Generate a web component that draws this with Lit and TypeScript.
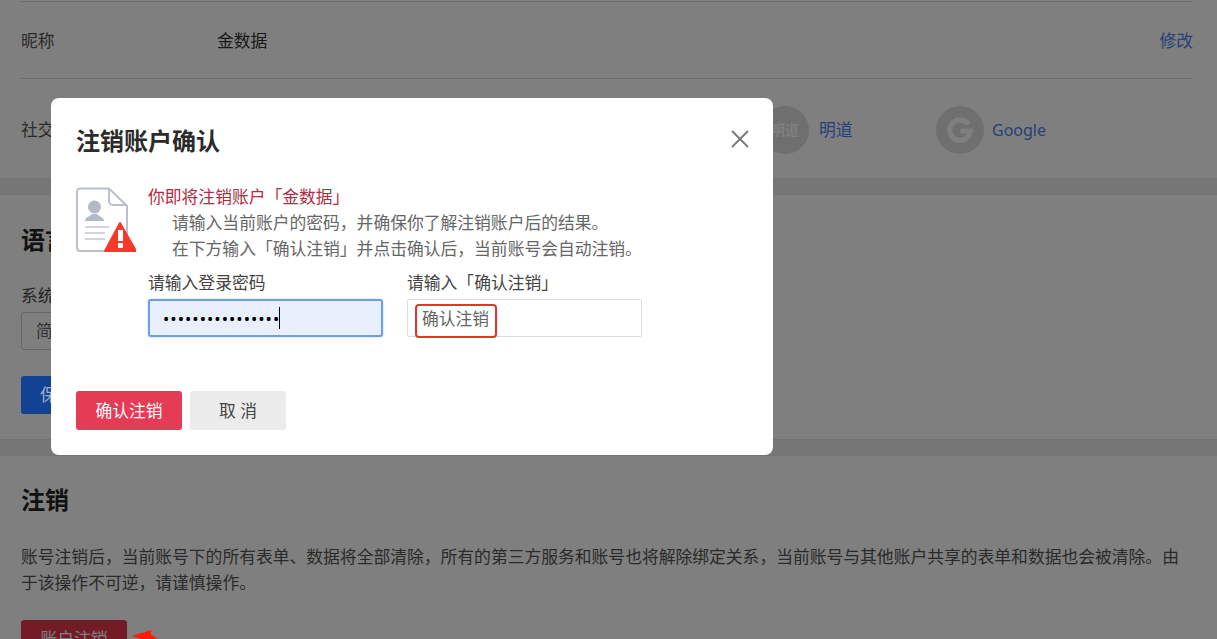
import { LitElement, html, css } from "lit";
import { customElement } from "lit/decorators.js";

const COMMA = "\uFF0C";
const PARA = `账号注销后${COMMA}当前账号下的所有表单、数据将全部清除${COMMA}所有的第三方服务和账号也将解除绑定关系${COMMA}当前账号与其他账户共享的表单和数据也会被清除。由于该操作不可逆${COMMA}请谨慎操作。`;
const DESC1 = `请输入当前账户的密码${COMMA}并确保你了解注销账户后的结果。`;
const DESC2 = `在下方输入「确认注销」并点击确认后${COMMA}当前账号会自动注销。`;

@customElement("app-root")
export class AppRoot extends LitElement {
  static styles = css`
    :host {
      display: block;
      position: relative;
      height: 639px;
      overflow: hidden;
      background: #fff;
      font-family: "Noto Sans", "Noto Sans CJK SC", sans-serif;
      font-size: 16.8px;
      line-height: 26px;
      color: #333;
    }
    * { box-sizing: border-box; }
    .section { padding: 0 24px 0 21px; }
    .band { height: 17px; background: #ededed; border-top: 1px solid #e6e6e6; border-bottom: 1px solid #e6e6e6; }
    .sec1 { height: 178px; padding-top: 1px; }
    .row { display: flex; align-items: center; border-top: 1px solid #d8d8d8; height: 77px; padding-top: 2px; }
    .row.social { height: 100px; }
    .row .key { width: 196px; color: #555; flex: none; }
    .row .val { flex: 1; color: #333; }
    .link { color: #4a84f0; }
    .latin { font-size: 16px; }
    .socials { display: flex; padding-left: 544px; }
    .soc { display: flex; align-items: center; gap: 10px; width: 175px; }
    .soc.g { gap: 8px; }
    .circle { width: 48px; height: 48px; border-radius: 50%; background: #dedede; display: flex; align-items: center; justify-content: center; color: #fff; font-size: 14px; font-weight: 700; flex: none; }
    .sec2 { height: 244px; padding-top: 28px; }
    h2 { margin: 0; font-size: 24px; line-height: 34px; font-weight: 700; color: #222; }
    .lab { margin-top: 26px; color: #444; }
    .select { margin-top: 3px; width: 300px; height: 38px; border: 1px solid #ccc; border-radius: 3px; padding: 5px 14px; color: #666; }
    .save { position: relative; z-index: 2; margin-top: 26px; width: 106px; height: 38px; background: #124292; color: #9fb0d0; border-radius: 3px; padding: 6px 19px; }
    .sec3 { padding-top: 27px; }
    .para { margin: 27px 0 0; color: #555; }
    .del { margin-top: 24px; width: 106px; height: 38px; background: #e63850; color: #fff; border-radius: 3px; display: flex; align-items: center; justify-content: center; }
    .arrow { position: absolute; left: 130px; top: 629px; z-index: 2; }
    .overlay { position: absolute; inset: 0; z-index: 1; background: rgba(0, 0, 0, 0.5); }
    .modal { position: absolute; z-index: 3; left: 51px; top: 98px; width: 722px; height: 357px; background: #fff; border-radius: 8px; padding: 26px 25px; }
    .title { margin: 0; font-size: 24px; line-height: 34px; font-weight: 700; color: #2b2b2b; }
    .close { position: absolute; left: 679px; top: 31px; width: 20px; height: 20px; }
    .body { display: flex; margin-top: 26px; }
    .icon { width: 72px; flex: none; padding-top: 3px; }
    .icon svg { display: block; }
    .warn { color: #b22b40; }
    .desc { padding-left: 24px; color: #666; }
    .fields { display: flex; gap: 24px; margin-top: 8px; }
    .field { width: 235px; }
    .field .name { color: #444; height: 26px; }
    .input { margin-top: 3px; height: 38px; position: relative; }
    .input input { display: block; width: 100%; height: 100%; margin: 0; padding: 0 14px; font: inherit; color: #000; border: 1px solid #ddd; border-radius: 2px; background: #fff; outline: none; }
    .input input.focus { background: #e8f0fe; border: 2px solid #6d9fe8; border-radius: 3px; padding: 0 13px; letter-spacing: 1.02px; box-shadow: 0 0 2px rgba(109, 159, 232, 0.6); }
    .input input.plain { color: #666; }
    .caret { position: absolute; left: 131px; top: 8px; width: 1px; height: 22px; background: #000; }
    .mark { position: absolute; left: 8px; top: 5px; width: 82px; height: 34px; border: 2px solid #e8322a; border-radius: 4px; }
    .btns { display: flex; gap: 8px; margin-top: 54px; }
    .btn { width: 106px; height: 39px; border-radius: 3px; display: flex; align-items: center; justify-content: center; }
    .ok { background: #e63b54; color: #fff; }
    .cancel { width: 96px; background: #ebebeb; color: #444; }
  `;

  render() {
    return html`
      <div class="section sec1">
        <div class="row"><span class="key">昵称</span><span class="val">金数据</span><span class="link">修改</span></div>
        <div class="row social">
          <span class="key">社交账号</span>
          <div class="socials">
            <div class="soc"><span class="circle">明道</span><span class="link">明道</span></div>
            <div class="soc g">
              <span class="circle">
                <svg width="28" height="28" viewBox="0 0 28 28"><path d="M22.5 8.2A10.3 10.3 0 1 0 24.3 15H14.5" fill="none" stroke="#fff" stroke-width="5.2"/></svg>
              </span>
              <span class="link latin">Google</span>
            </div>
          </div>
        </div>
      </div>
      <div class="band"></div>
      <div class="section sec2">
        <h2>语言设置</h2>
        <div class="lab">系统语言</div>
        <div class="select">简体中文</div>
        <div class="save">保存</div>
      </div>
      <div class="band"></div>
      <div class="section sec3">
        <h2>注销</h2>
        <p class="para">${PARA}</p>
        <div class="del">账户注销</div>
      </div>
      <div class="overlay"></div>
      <svg class="arrow" width="30" height="10" viewBox="0 0 30 10"><path d="M1.5 7 L22 1 L20.5 5 L28 10 L11 10 Z" fill="#ff1a0d"/></svg>
      <div class="modal">
        <h3 class="title">注销账户确认</h3>
        <svg class="close" viewBox="0 0 20 20"><path d="M2 2 L18 18 M18 2 L2 18" stroke="#777" stroke-width="1.8" fill="none"/></svg>
        <div class="body">
          <div class="icon">
            <svg width="60" height="66" viewBox="0 0 60 66">
              <path d="M4 1.5H33L51 19V61a3 3 0 0 1-3 3H4a3 3 0 0 1-3-3V4.5a3 3 0 0 1 3-3Z" fill="#fff" stroke="#b9c0cb" stroke-width="2"/>
              <path d="M33 1.5V14a4 4 0 0 0 4 4H51" fill="none" stroke="#b9c0cb" stroke-width="2"/>
              <circle cx="18.500" cy="20" r="6.500" fill="#b4bac5"/>
              <path d="M9 34c0-4 6-5 7-7h5c1 2 7 3 7 7Z" fill="#b4bac5"/>
              <path d="M9 40H33M9 46H29M9 52H29" stroke="#c3c8d1" stroke-width="1.500" fill="none"/>
              <path d="M44 36 L60 64 H29 Z" fill="#f5392a" stroke="#f5392a" stroke-width="2" stroke-linejoin="round"/>
              <rect x="42" y="43" width="5" height="11" fill="#fff"/>
              <rect x="42" y="56" width="5" height="5" fill="#fff"/>
            </svg>
          </div>
          <div>
            <div class="warn">你即将注销账户「金数据」</div>
            <div class="desc">${DESC1}</div>
            <div class="desc">${DESC2}</div>
            <div class="fields">
              <div class="field">
                <div class="name">请输入登录密码</div>
                <div class="input"><input class="focus" type="password" value="1234567890123456" readonly /><span class="caret"></span></div>
              </div>
              <div class="field">
                <div class="name">请输入「确认注销」</div>
                <div class="input"><input class="plain" type="text" value="确认注销" readonly /><span class="mark"></span></div>
              </div>
            </div>
          </div>
        </div>
        <div class="btns">
          <div class="btn ok">确认注销</div>
          <div class="btn cancel">取 消</div>
        </div>
      </div>
    `;
  }
}
